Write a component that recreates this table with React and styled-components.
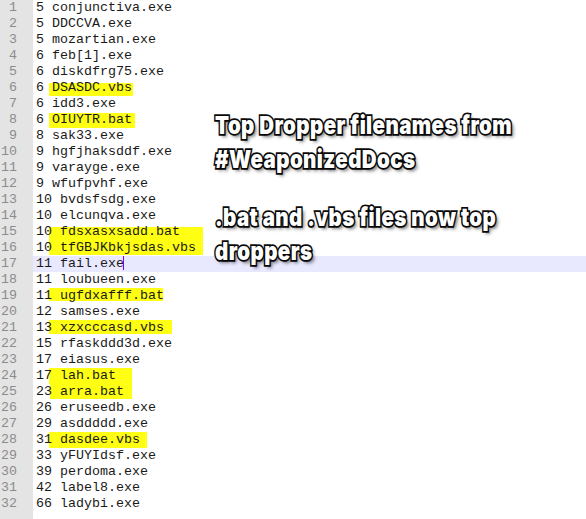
import React from "react";
import styled, { createGlobalStyle } from "styled-components";

const Global = createGlobalStyle`
  html, body { margin: 0; padding: 0; background: #fff; }
  body { overflow: hidden; }
`;

const LINES = [
  { t: "5 conjunctiva.exe" },
  { t: "5 DDCCVA.exe" },
  { t: "5 mozartian.exe" },
  { t: "6 feb[1].exe" },
  { t: "6 diskdfrg75.exe" },
  { t: "6 DSASDC.vbs", m: { l: 16, r: 100, top: 3, h: 13 } },
  { t: "6 idd3.exe" },
  { t: "6 OIUYTR.bat", m: { l: 16, r: 102, top: 1, h: 15 } },
  { t: "8 sak33.exe" },
  { t: "9 hgfjhaksddf.exe" },
  { t: "9 varayge.exe" },
  { t: "9 wfufpvhf.exe" },
  { t: "10 bvdsfsdg.exe" },
  { t: "10 elcunqva.exe" },
  { t: "10 fdsxasxsadd.bat", m: { l: 16, r: 170, top: 3, h: 13 } },
  { t: "10 tfGBJKbkjsdas.vbs", m: { l: 16, r: 170, top: 0, h: 15 } },
  { t: "11 fail.exe", current: true },
  { t: "11 loubueen.exe" },
  { t: "11 ugfdxafff.bat", m: { l: 16, r: 130, top: 0, h: 13 } },
  { t: "12 samses.exe" },
  { t: "13 xzxcccasd.vbs", m: { l: 16, r: 139, top: 0, h: 14 } },
  { t: "15 rfaskddd3d.exe" },
  { t: "17 eiasus.exe" },
  { t: "17 lah.bat", m: { l: 16, r: 99, top: 0, h: 16 } },
  { t: "23 arra.bat", m: { l: 17, r: 99, top: 0, h: 15 } },
  { t: "26 eruseedb.exe" },
  { t: "29 asddddd.exe" },
  { t: "31 dasdee.vbs", m: { l: 16, r: 114, top: 0, h: 16 } },
  { t: "33 yFUYIdsf.exe" },
  { t: "39 perdoma.exe" },
  { t: "42 label8.exe" },
  { t: "66 ladybi.exe" },
];

const Editor = styled.div`
  position: relative;
  display: flex;
  height: 519px;
  font-family: "Liberation Mono", "Courier New", monospace;
  font-size: 13.333px;
  line-height: 16px;
`;

const Gutter = styled.div`
  width: 33px;
  flex: none;
  background: #e4e4e4;
  display: flex;
  flex-direction: column;
`;

const LineNo = styled.div`
  width: 17px;
  height: 16px;
  text-align: right;
  color: #8c8c8c;
  white-space: nowrap;
`;

const TextArea = styled.div`
  flex: 1;
  display: flex;
  flex-direction: column;
`;

const Line = styled.div`
  position: relative;
  height: 16px;
  padding-left: 3px;
  color: #1a1a1a;
  white-space: pre;
  background: ${(p) => (p.$current ? "#e8e8ff" : "transparent")};
`;

const Mark = styled.span`
  position: absolute;
  left: ${(p) => p.$l}px;
  width: ${(p) => p.$r - p.$l}px;
  top: ${(p) => p.$top}px;
  height: ${(p) => p.$h}px;
  background: #ffff14;
`;

const Code = styled.span`
  position: relative;
`;

const Caret = styled.span`
  display: inline-block;
  position: relative;
  width: 1px;
  height: 14px;
  margin-left: -1px;
  vertical-align: -3px;
  background: #8000ff;
`;

const Callout = styled.div`
  position: absolute;
  left: 215px;
  top: 108px;
  display: flex;
  flex-direction: column;
  gap: 24px;
  transform: scaleX(0.82);
  transform-origin: left top;
`;

const Para = styled.div`
  font-family: Inter, "DejaVu Sans", sans-serif;
  font-weight: 900;
  font-size: 25px;
  line-height: 34px;
  letter-spacing: 0.5px;
  color: #fff;
  white-space: nowrap;
  -webkit-text-stroke: 3.5px #0a0a0a;
  paint-order: stroke fill;
  text-shadow: 3px 3px 4px rgba(0, 0, 0, 0.55);
`;

export default function App() {
  return (
    <>
      <Global />
      <Editor>
        <Gutter>
          {LINES.map((_, i) => (
            <LineNo key={i}>{i + 1}</LineNo>
          ))}
        </Gutter>
        <TextArea>
          {LINES.map((ln, i) => (
            <Line key={i} $current={ln.current}>
              {ln.m && <Mark $l={ln.m.l} $r={ln.m.r} $top={ln.m.top} $h={ln.m.h} />}
              <Code>{ln.t}</Code>
              {ln.current && <Caret />}
            </Line>
          ))}
        </TextArea>
        <Callout>
          <Para>
            Top Dropper filenames from
            <br />
            #WeaponizedDocs
          </Para>
          <Para>
            .bat and .vbs files now top
            <br />
            droppers
          </Para>
        </Callout>
      </Editor>
    </>
  );
}
